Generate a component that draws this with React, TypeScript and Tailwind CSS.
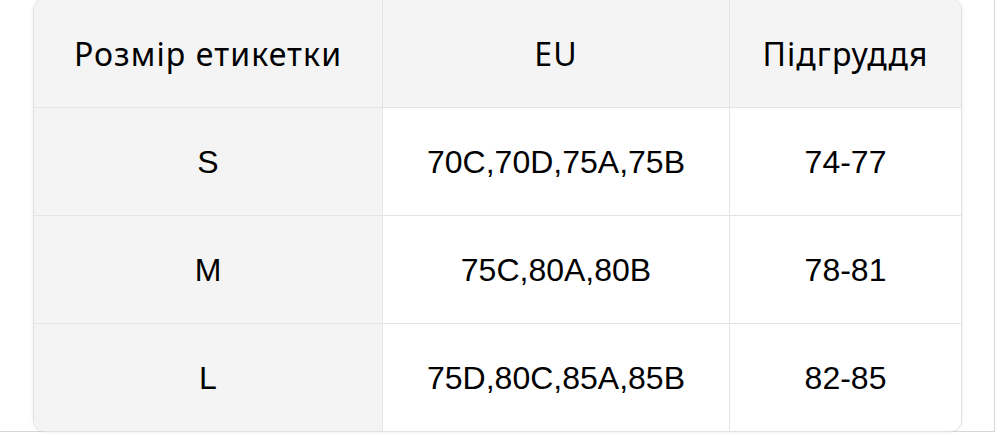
import React from "react";

const rows = [
  ["S", "70C,70D,75A,75B", "74-77"],
  ["M", "75C,80A,80B", "78-81"],
  ["L", "75D,80C,85A,85B", "82-85"],
];

export default function App() {
  return (
    <div className="w-[1000px] h-[435px] bg-white overflow-hidden" style={{ fontFamily: '"Liberation Sans", Arial, sans-serif' }}>
      <div className="w-[995px] h-[434px] border-r border-b border-[#d6d6d6]">
        <div className="ml-[33px] mt-[-2px] w-[929px] rounded-[12px] border border-[#e2e2e2] overflow-hidden shadow-[0_0_3px_rgba(0,0,0,0.10)] text-[32px] text-black">
          <div className="grid grid-cols-[348px_347px_232px] h-[108px] bg-[#f4f4f4] font-['Noto_Sans',sans-serif] text-[32px] tracking-[1.1px]">
            <div className="flex items-center justify-center pt-[1px]">Розмір етикетки</div>
            <div className="flex items-center justify-center border-l border-[#e4e4e4] pt-[1px]">EU</div>
            <div className="flex items-center justify-center border-l border-[#e4e4e4] pt-[1px]">Підгруддя</div>
          </div>
          {rows.map((r) => (
            <div key={r[0]} className="grid grid-cols-[348px_347px_232px] h-[108px] border-t border-[#e4e4e4] bg-white">
              <div className="flex items-center justify-center bg-[#f4f4f4] pt-[1px]">{r[0]}</div>
              <div className="flex items-center justify-center border-l border-[#e4e4e4] pt-[1px]">{r[1]}</div>
              <div className="flex items-center justify-center border-l border-[#e4e4e4] pt-[1px]">{r[2]}</div>
            </div>
          ))}
        </div>
      </div>
    </div>
  );
}
